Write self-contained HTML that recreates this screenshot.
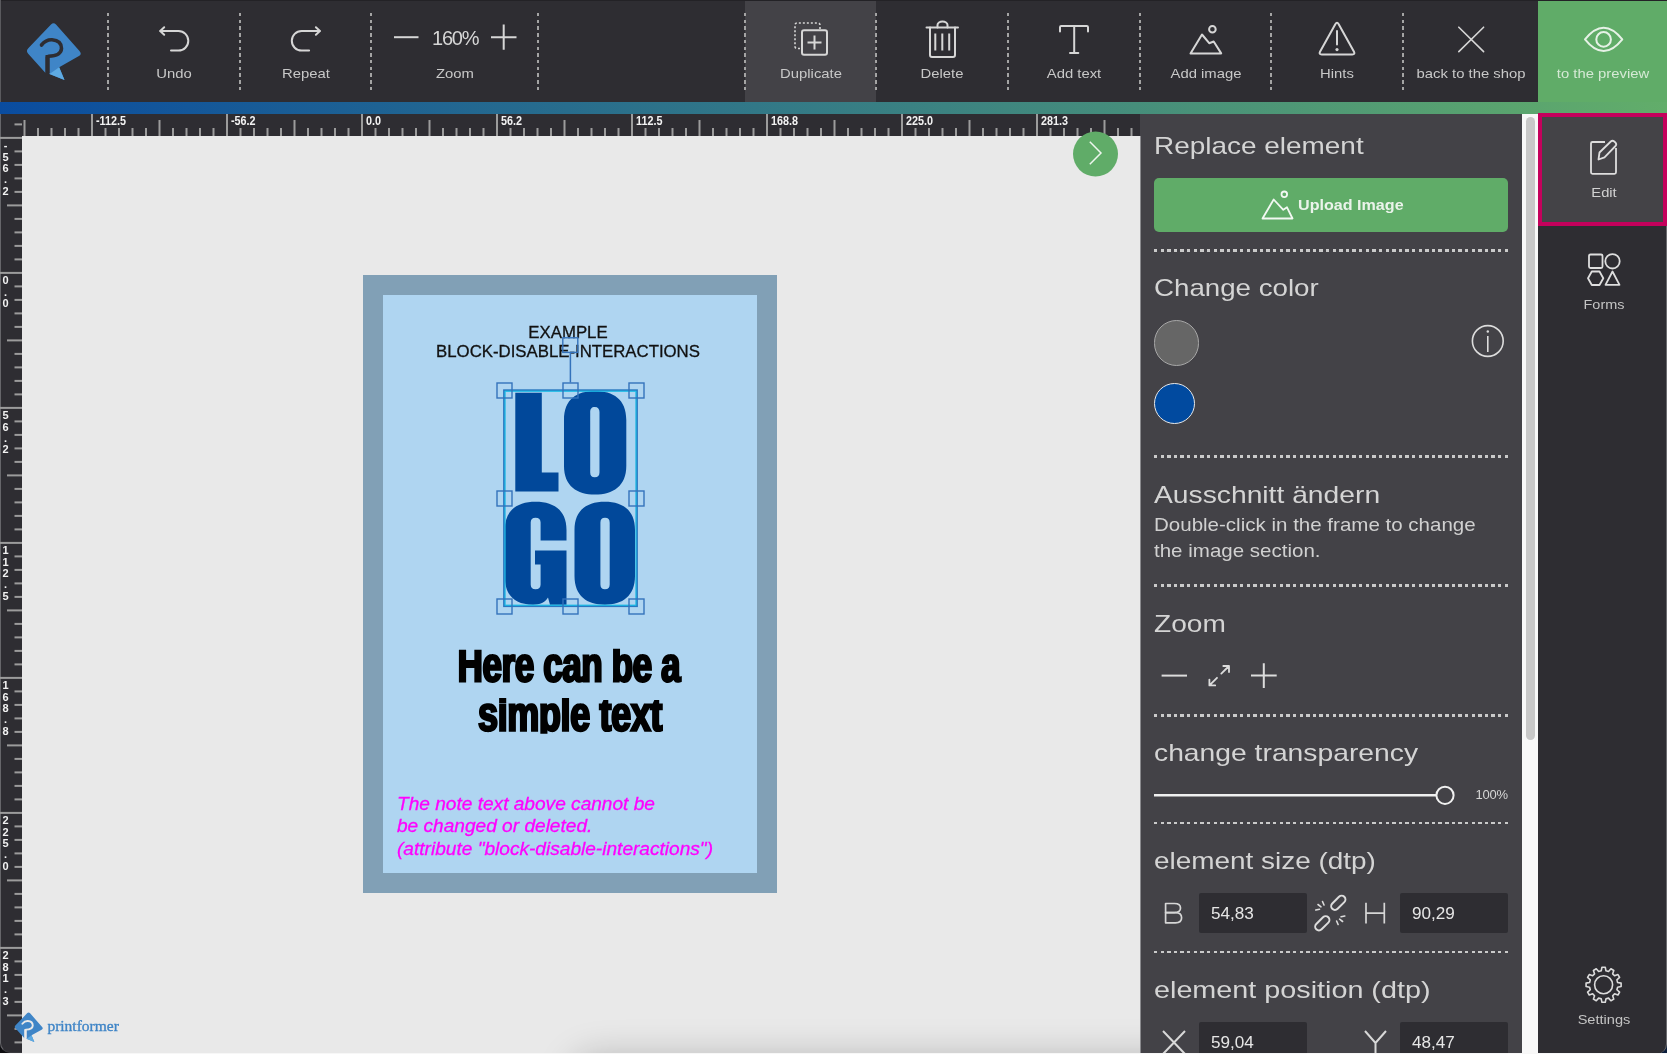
<!DOCTYPE html>
<html><head><meta charset="utf-8"><style>
*{margin:0;padding:0;box-sizing:border-box}
html,body{width:1667px;height:1054px;overflow:hidden;background:#e9e9e9;font-family:"Liberation Sans",sans-serif}
.a{position:absolute}
.lbl{position:absolute;top:67.44px;font-size:13.1px;color:#c8c8c8;letter-spacing:0;white-space:nowrap;line-height:14px;text-align:center;transform:scaleX(1.133);will-change:transform}
.sep{position:absolute;top:13px;width:2px;height:78px;margin-left:-1px;background:repeating-linear-gradient(to bottom,#a4a4a4 0,#a4a4a4 3.4px,transparent 3.4px,transparent 6.72px)}
.h{position:absolute;left:1154px;font-size:24px;color:#d4d4d4;letter-spacing:1.9px;white-space:nowrap;line-height:24px}
.dots{position:absolute;left:1154px;width:354px;height:2.6px;background:repeating-linear-gradient(to right,#cacaca 0,#cacaca 3.4px,transparent 3.4px,transparent 6.616px)}
svg{position:absolute;left:0;top:0;overflow:visible}
</style></head><body>
<div id="root" style="position:absolute;left:0;top:0;width:1667px;height:1054px;overflow:hidden;opacity:0.999;will-change:opacity">
<div class="a" style="left:0;top:0;width:1667px;height:102px;background:#2e2d32"></div>
<div class="a" style="left:0;top:0;width:1667px;height:1px;background:#232226"></div>
<div class="a" style="left:0;top:0;width:1px;height:114px;background:#5a5a5e"></div>
<div class="a" style="left:745px;top:1px;width:131px;height:101px;background:#434247"></div>
<div class="a" style="left:1538px;top:1px;width:129px;height:101px;background:#60ac68"></div>
<div class="sep" style="left:108px"></div>
<div class="sep" style="left:240px"></div>
<div class="sep" style="left:371px"></div>
<div class="sep" style="left:538px"></div>
<div class="sep" style="left:745px"></div>
<div class="sep" style="left:876px"></div>
<div class="sep" style="left:1008px"></div>
<div class="sep" style="left:1140px"></div>
<div class="sep" style="left:1271px"></div>
<div class="sep" style="left:1403px"></div>
<svg width="1667" height="102" viewBox="0 0 1667 102" style="left:0;top:0">
<g fill="none" stroke="#d6d6d6" stroke-width="2" stroke-linecap="round" stroke-linejoin="round">
<!-- undo -->
<path d="M160.5 31 H178.5 A9.8 9.8 0 0 1 178.5 50.6 H171"/>
<path d="M164.2 27.3 L160.2 31 L164.2 34.7"/>
<!-- repeat -->
<path d="M319.6 31 H301.6 A9.8 9.8 0 0 0 301.6 50.6 H309.1"/>
<path d="M315.9 27.3 L319.9 31 L315.9 34.7"/>
<!-- zoom -->
<path d="M394 37.2 H418.5" stroke-linecap="butt"/>
<path d="M491 37.2 H516.5 M503.7 24.6 V49.8" stroke-linecap="butt"/>
<!-- duplicate -->
<path d="M800 48.5 H797 A2 2 0 0 1 795 46.5 V25 A2 2 0 0 1 797 23 H818 A2 2 0 0 1 820 25 V30" stroke-dasharray="2 2" stroke-width="1.6" stroke-linecap="butt"/>
<rect x="802" y="30.2" width="25" height="24.5" rx="2"/>
<path d="M814.5 35.5 V49.5 M807.5 42.5 H821.5" stroke-linecap="butt"/>
<!-- delete -->
<path d="M926.5 27.5 H958"/>
<path d="M937.5 27.5 V25 A5 3.5 0 0 1 947.5 25 V27.5"/>
<path d="M930 27.5 V55 A2 2 0 0 0 932 57 H953 A2 2 0 0 0 955 55 V27.5"/>
<path d="M935.3 33.5 V50.5 M942.3 33.5 V50.5 M949.2 33.5 V50.5" stroke-linecap="butt"/>
<!-- add text -->
<path d="M1060 31.5 V27 A1.2 1.2 0 0 1 1061.2 25.9 H1086.8 A1.2 1.2 0 0 1 1088 27 V31.5"/>
<path d="M1074.2 26 V53 M1070 53 H1078.3"/>
<!-- add image -->
<path d="M1190.5 53.4 L1202 34.5 L1209.2 43.2 L1213.7 41.5 L1221.2 53.4 Z"/>
<circle cx="1212.4" cy="29.3" r="3.3"/>
<!-- hints -->
<path d="M1335.3 24.2 Q1337 21.5 1338.7 24.2 L1354 51.8 Q1355.3 54.5 1352.3 54.5 H1321.7 Q1318.7 54.5 1320 51.8 Z"/>
<path d="M1337 31 V44.5"/>
<!-- X -->
<path d="M1458.8 27.2 L1483.6 51.6 M1483.6 27.2 L1458.8 51.6" stroke-width="1.6"/>
<!-- eye -->
<path d="M1585 39.4 Q1603.6 16 1622.3 39.4 Q1603.6 62.8 1585 39.4 Z" stroke="#e6f2e6"/>
<circle cx="1603.6" cy="39.4" r="7.3" stroke="#e6f2e6"/>
</g>
<circle cx="1337" cy="49.6" r="1.6" fill="#d6d6d6"/>
<!-- logo -->
<g>
<path d="M51 24.5 Q53.5 22 56 24.5 L79.5 51 Q82.5 54.5 78.5 56.3 L59.2 67.3 L64.5 80 L49.5 74 L49.5 56.5 L45.5 56.5 L45.5 73 L28.2 53.8 Q25.5 50.8 28.5 48 Z" fill="#3f85c7"/>
<path d="M49.5 74 L59.2 67.3 L64.5 80 Z" fill="#5eaae2"/>
<path d="M41.5 45 Q46 39.5 52 39.8 Q61.5 40.5 61.5 48.5 Q61 56 48.5 56.2" fill="none" stroke="#2e2d32" stroke-width="3.6" stroke-linecap="round"/>
<path d="M47.5 55 V73" stroke="#2e2d32" stroke-width="4"/>
</g>
</svg>
<div class="a" style="left:432px;top:28px;font-size:20px;line-height:20px;color:#d6d6d6;white-space:nowrap;letter-spacing:-1.2px;will-change:transform">160%</div>
<div class="lbl" style="left:74px;width:200px;top:67.44px">Undo</div>
<div class="lbl" style="left:206px;width:200px;top:67.44px">Repeat</div>
<div class="lbl" style="left:355px;width:200px;top:67.44px">Zoom</div>
<div class="lbl" style="left:711px;width:200px;top:67.44px">Duplicate</div>
<div class="lbl" style="left:842px;width:200px;top:67.44px">Delete</div>
<div class="lbl" style="left:974px;width:200px;top:67.44px">Add text</div>
<div class="lbl" style="left:1106px;width:200px;top:67.44px">Add image</div>
<div class="lbl" style="left:1237px;width:200px;top:67.44px">Hints</div>
<div class="lbl" style="left:1371px;width:200px;top:67.44px">back to the shop</div>
<div class="lbl" style="left:1503px;width:200px;top:67.44px;color:#d5e9d5">to the preview</div>
<div class="a" style="left:0;top:102px;width:1667px;height:12px;background:linear-gradient(to right,#0a4c9f 0%,#62ad6a 100%)"></div>
<div class="a" style="left:22px;top:114px;width:1118px;height:22px;background:#2e2d32"></div>
<div class="a" style="left:0;top:1030px;width:22px;height:24px;background:#0d0d10"></div>
<div class="a" style="left:0;top:114px;width:22px;height:939px;background:#2e2d32;border-bottom-left-radius:10px;border-left:1px solid #66666a;border-bottom:1px solid #3a3a3e"></div>
<svg width="1667" height="1054" style="left:0;top:0">
<g fill="#9c9c9c">
<rect x="23.50" y="120" width="2" height="16"/>
<rect x="37.00" y="128" width="2" height="8"/>
<rect x="50.50" y="128" width="2" height="8"/>
<rect x="64.00" y="128" width="2" height="8"/>
<rect x="77.50" y="128" width="2" height="8"/>
<rect x="91.00" y="114" width="2" height="22"/>
<rect x="104.50" y="128" width="2" height="8"/>
<rect x="118.00" y="128" width="2" height="8"/>
<rect x="131.50" y="128" width="2" height="8"/>
<rect x="145.00" y="128" width="2" height="8"/>
<rect x="158.50" y="120" width="2" height="16"/>
<rect x="172.00" y="128" width="2" height="8"/>
<rect x="185.50" y="128" width="2" height="8"/>
<rect x="199.00" y="128" width="2" height="8"/>
<rect x="212.50" y="128" width="2" height="8"/>
<rect x="226.00" y="114" width="2" height="22"/>
<rect x="239.50" y="128" width="2" height="8"/>
<rect x="253.00" y="128" width="2" height="8"/>
<rect x="266.50" y="128" width="2" height="8"/>
<rect x="280.00" y="128" width="2" height="8"/>
<rect x="293.50" y="120" width="2" height="16"/>
<rect x="307.00" y="128" width="2" height="8"/>
<rect x="320.50" y="128" width="2" height="8"/>
<rect x="334.00" y="128" width="2" height="8"/>
<rect x="347.50" y="128" width="2" height="8"/>
<rect x="361.00" y="114" width="2" height="22"/>
<rect x="374.50" y="128" width="2" height="8"/>
<rect x="388.00" y="128" width="2" height="8"/>
<rect x="401.50" y="128" width="2" height="8"/>
<rect x="415.00" y="128" width="2" height="8"/>
<rect x="428.50" y="120" width="2" height="16"/>
<rect x="442.00" y="128" width="2" height="8"/>
<rect x="455.50" y="128" width="2" height="8"/>
<rect x="469.00" y="128" width="2" height="8"/>
<rect x="482.50" y="128" width="2" height="8"/>
<rect x="496.00" y="114" width="2" height="22"/>
<rect x="509.50" y="128" width="2" height="8"/>
<rect x="523.00" y="128" width="2" height="8"/>
<rect x="536.50" y="128" width="2" height="8"/>
<rect x="550.00" y="128" width="2" height="8"/>
<rect x="563.50" y="120" width="2" height="16"/>
<rect x="577.00" y="128" width="2" height="8"/>
<rect x="590.50" y="128" width="2" height="8"/>
<rect x="604.00" y="128" width="2" height="8"/>
<rect x="617.50" y="128" width="2" height="8"/>
<rect x="631.00" y="114" width="2" height="22"/>
<rect x="644.50" y="128" width="2" height="8"/>
<rect x="658.00" y="128" width="2" height="8"/>
<rect x="671.50" y="128" width="2" height="8"/>
<rect x="685.00" y="128" width="2" height="8"/>
<rect x="698.50" y="120" width="2" height="16"/>
<rect x="712.00" y="128" width="2" height="8"/>
<rect x="725.50" y="128" width="2" height="8"/>
<rect x="739.00" y="128" width="2" height="8"/>
<rect x="752.50" y="128" width="2" height="8"/>
<rect x="766.00" y="114" width="2" height="22"/>
<rect x="779.50" y="128" width="2" height="8"/>
<rect x="793.00" y="128" width="2" height="8"/>
<rect x="806.50" y="128" width="2" height="8"/>
<rect x="820.00" y="128" width="2" height="8"/>
<rect x="833.50" y="120" width="2" height="16"/>
<rect x="847.00" y="128" width="2" height="8"/>
<rect x="860.50" y="128" width="2" height="8"/>
<rect x="874.00" y="128" width="2" height="8"/>
<rect x="887.50" y="128" width="2" height="8"/>
<rect x="901.00" y="114" width="2" height="22"/>
<rect x="914.50" y="128" width="2" height="8"/>
<rect x="928.00" y="128" width="2" height="8"/>
<rect x="941.50" y="128" width="2" height="8"/>
<rect x="955.00" y="128" width="2" height="8"/>
<rect x="968.50" y="120" width="2" height="16"/>
<rect x="982.00" y="128" width="2" height="8"/>
<rect x="995.50" y="128" width="2" height="8"/>
<rect x="1009.00" y="128" width="2" height="8"/>
<rect x="1022.50" y="128" width="2" height="8"/>
<rect x="1036.00" y="114" width="2" height="22"/>
<rect x="1049.50" y="128" width="2" height="8"/>
<rect x="1063.00" y="128" width="2" height="8"/>
<rect x="1076.50" y="128" width="2" height="8"/>
<rect x="1090.00" y="128" width="2" height="8"/>
<rect x="1103.50" y="120" width="2" height="16"/>
<rect x="1117.00" y="128" width="2" height="8"/>
<rect x="1130.50" y="128" width="2" height="8"/>
<rect x="14.5" y="123.40" width="7.5" height="2"/>
<rect x="0" y="136.90" width="22" height="2"/>
<rect x="14.5" y="150.40" width="7.5" height="2"/>
<rect x="14.5" y="163.90" width="7.5" height="2"/>
<rect x="14.5" y="177.40" width="7.5" height="2"/>
<rect x="14.5" y="190.90" width="7.5" height="2"/>
<rect x="7" y="204.40" width="15" height="2"/>
<rect x="14.5" y="217.90" width="7.5" height="2"/>
<rect x="14.5" y="231.40" width="7.5" height="2"/>
<rect x="14.5" y="244.90" width="7.5" height="2"/>
<rect x="14.5" y="258.40" width="7.5" height="2"/>
<rect x="0" y="271.90" width="22" height="2"/>
<rect x="14.5" y="285.40" width="7.5" height="2"/>
<rect x="14.5" y="298.90" width="7.5" height="2"/>
<rect x="14.5" y="312.40" width="7.5" height="2"/>
<rect x="14.5" y="325.90" width="7.5" height="2"/>
<rect x="7" y="339.40" width="15" height="2"/>
<rect x="14.5" y="352.90" width="7.5" height="2"/>
<rect x="14.5" y="366.40" width="7.5" height="2"/>
<rect x="14.5" y="379.90" width="7.5" height="2"/>
<rect x="14.5" y="393.40" width="7.5" height="2"/>
<rect x="0" y="406.90" width="22" height="2"/>
<rect x="14.5" y="420.40" width="7.5" height="2"/>
<rect x="14.5" y="433.90" width="7.5" height="2"/>
<rect x="14.5" y="447.40" width="7.5" height="2"/>
<rect x="14.5" y="460.90" width="7.5" height="2"/>
<rect x="7" y="474.40" width="15" height="2"/>
<rect x="14.5" y="487.90" width="7.5" height="2"/>
<rect x="14.5" y="501.40" width="7.5" height="2"/>
<rect x="14.5" y="514.90" width="7.5" height="2"/>
<rect x="14.5" y="528.40" width="7.5" height="2"/>
<rect x="0" y="541.90" width="22" height="2"/>
<rect x="14.5" y="555.40" width="7.5" height="2"/>
<rect x="14.5" y="568.90" width="7.5" height="2"/>
<rect x="14.5" y="582.40" width="7.5" height="2"/>
<rect x="14.5" y="595.90" width="7.5" height="2"/>
<rect x="7" y="609.40" width="15" height="2"/>
<rect x="14.5" y="622.90" width="7.5" height="2"/>
<rect x="14.5" y="636.40" width="7.5" height="2"/>
<rect x="14.5" y="649.90" width="7.5" height="2"/>
<rect x="14.5" y="663.40" width="7.5" height="2"/>
<rect x="0" y="676.90" width="22" height="2"/>
<rect x="14.5" y="690.40" width="7.5" height="2"/>
<rect x="14.5" y="703.90" width="7.5" height="2"/>
<rect x="14.5" y="717.40" width="7.5" height="2"/>
<rect x="14.5" y="730.90" width="7.5" height="2"/>
<rect x="7" y="744.40" width="15" height="2"/>
<rect x="14.5" y="757.90" width="7.5" height="2"/>
<rect x="14.5" y="771.40" width="7.5" height="2"/>
<rect x="14.5" y="784.90" width="7.5" height="2"/>
<rect x="14.5" y="798.40" width="7.5" height="2"/>
<rect x="0" y="811.90" width="22" height="2"/>
<rect x="14.5" y="825.40" width="7.5" height="2"/>
<rect x="14.5" y="838.90" width="7.5" height="2"/>
<rect x="14.5" y="852.40" width="7.5" height="2"/>
<rect x="14.5" y="865.90" width="7.5" height="2"/>
<rect x="7" y="879.40" width="15" height="2"/>
<rect x="14.5" y="892.90" width="7.5" height="2"/>
<rect x="14.5" y="906.40" width="7.5" height="2"/>
<rect x="14.5" y="919.90" width="7.5" height="2"/>
<rect x="14.5" y="933.40" width="7.5" height="2"/>
<rect x="0" y="946.90" width="22" height="2"/>
<rect x="14.5" y="960.40" width="7.5" height="2"/>
<rect x="14.5" y="973.90" width="7.5" height="2"/>
<rect x="14.5" y="987.40" width="7.5" height="2"/>
<rect x="14.5" y="1000.90" width="7.5" height="2"/>
<rect x="7" y="1014.40" width="15" height="2"/>
<rect x="14.5" y="1027.90" width="7.5" height="2"/>
<rect x="14.5" y="1041.40" width="7.5" height="2"/>
</g>
</svg>
<div class="a" style="left:96.3px;top:115.2px;font-size:12px;line-height:12px;font-weight:bold;color:#f2f2f2;white-space:nowrap;transform:scaleX(0.9);transform-origin:0 0">-112.5</div>
<div class="a" style="left:231.3px;top:115.2px;font-size:12px;line-height:12px;font-weight:bold;color:#f2f2f2;white-space:nowrap;transform:scaleX(0.9);transform-origin:0 0">-56.2</div>
<div class="a" style="left:366.3px;top:115.2px;font-size:12px;line-height:12px;font-weight:bold;color:#f2f2f2;white-space:nowrap;transform:scaleX(0.9);transform-origin:0 0">0.0</div>
<div class="a" style="left:501.3px;top:115.2px;font-size:12px;line-height:12px;font-weight:bold;color:#f2f2f2;white-space:nowrap;transform:scaleX(0.9);transform-origin:0 0">56.2</div>
<div class="a" style="left:636.3px;top:115.2px;font-size:12px;line-height:12px;font-weight:bold;color:#f2f2f2;white-space:nowrap;transform:scaleX(0.9);transform-origin:0 0">112.5</div>
<div class="a" style="left:771.3px;top:115.2px;font-size:12px;line-height:12px;font-weight:bold;color:#f2f2f2;white-space:nowrap;transform:scaleX(0.9);transform-origin:0 0">168.8</div>
<div class="a" style="left:906.3px;top:115.2px;font-size:12px;line-height:12px;font-weight:bold;color:#f2f2f2;white-space:nowrap;transform:scaleX(0.9);transform-origin:0 0">225.0</div>
<div class="a" style="left:1041.3px;top:115.2px;font-size:12px;line-height:12px;font-weight:bold;color:#f2f2f2;white-space:nowrap;transform:scaleX(0.9);transform-origin:0 0">281.3</div>
<div class="a" style="left:0.5px;top:140.4px;width:10px;font-size:11px;line-height:11.35px;font-weight:bold;color:#f2f2f2;text-align:center">-<br>5<br>6<br>.<br>2</div>
<div class="a" style="left:0.5px;top:275.4px;width:10px;font-size:11px;line-height:11.35px;font-weight:bold;color:#f2f2f2;text-align:center">0<br>.<br>0</div>
<div class="a" style="left:0.5px;top:410.4px;width:10px;font-size:11px;line-height:11.35px;font-weight:bold;color:#f2f2f2;text-align:center">5<br>6<br>.<br>2</div>
<div class="a" style="left:0.5px;top:545.4px;width:10px;font-size:11px;line-height:11.35px;font-weight:bold;color:#f2f2f2;text-align:center">1<br>1<br>2<br>.<br>5</div>
<div class="a" style="left:0.5px;top:680.4px;width:10px;font-size:11px;line-height:11.35px;font-weight:bold;color:#f2f2f2;text-align:center">1<br>6<br>8<br>.<br>8</div>
<div class="a" style="left:0.5px;top:815.4px;width:10px;font-size:11px;line-height:11.35px;font-weight:bold;color:#f2f2f2;text-align:center">2<br>2<br>5<br>.<br>0</div>
<div class="a" style="left:0.5px;top:950.4px;width:10px;font-size:11px;line-height:11.35px;font-weight:bold;color:#f2f2f2;text-align:center">2<br>8<br>1<br>.<br>3</div>
<div class="a" style="left:22px;top:136px;width:1118px;height:918px;background:#e9e9e9;overflow:hidden"><div class="a" style="left:555px;top:926px;width:745px;height:40px;border-radius:30px;background:#999;box-shadow:0 0 36px 6px rgba(0,0,0,0.22)"></div></div>
<svg width="1667" height="1054" style="left:0;top:0">
<circle cx="1095.5" cy="154" r="22.5" fill="#60ac68"/>
<path d="M1089.8 141.8 L1101 153 L1089.8 164.2" fill="none" stroke="#eef6ee" stroke-width="1.5"/>
</svg>
<div class="a" style="left:363.4px;top:274.7px;width:413.9px;height:618.1px;background:#81a0b6"></div>
<div class="a" style="left:383px;top:294.6px;width:374.2px;height:578.2px;background:#afd5f1"></div>
<div class="a" style="left:383px;top:322.8px;width:374px;text-align:center;font-size:16.8px;line-height:19.2px;color:#111;-webkit-text-stroke:0.3px #111;white-space:nowrap"><span style="position:relative;left:-2px">EXAMPLE</span><br><span style="position:relative;left:-2px">BLOCK-DISABLE-INTERACTIONS</span></div>
<svg width="1667" height="1054" style="left:0;top:0">
<g fill="#00489a">
<!-- L -->
<path d="M515.3 392.8 H541.8 V472.4 H558.5 V491.5 H515.3 Z"/>
<!-- O top -->
<path fill-rule="evenodd" d="M595 391 C613 391 626.3 399 626.3 420 V466 C626.3 486 613 494.6 595 494.6 C577 494.6 564 486 564 466 V420 C564 399 577 391 595 391 Z
 M594.8 407 C591.5 407 590.2 409 590.2 412 V472.3 C590.2 475.5 591.5 477.3 594.8 477.3 C598 477.3 599.5 475.5 599.5 472.3 V412 C599.5 409 598 407 594.8 407 Z"/>
<!-- G -->
<path fill-rule="evenodd" d="M535.6 501.7 C553.5 501.7 566.5 510 566.5 530 V540.6 H540.6 V522.5 C540.6 519.5 539 517.8 535.6 517.8 C532.2 517.8 530.7 519.5 530.7 522.5 V584.6 C530.7 587.6 532.2 589.3 535.6 589.3 C539 589.3 540.6 587.6 540.6 584.6 V564.6 H535 V550.4 H566.5 V604.7 H550 L548 597.5 C545 602.5 540 604.7 533 604.7 C515 604.7 504.8 596 504.8 576 V530 C504.8 510 517.5 501.7 535.6 501.7 Z"/>
<!-- O bottom -->
<path fill-rule="evenodd" d="M604.8 501.7 C622.5 501.7 635 510 635 530 V576 C635 596 622.5 604.7 604.8 604.7 C587 604.7 574.5 596 574.5 576 V530 C574.5 510 587 501.7 604.8 501.7 Z
 M605 517.8 C601.8 517.8 600.4 519.5 600.4 522.8 V584.3 C600.4 587.6 601.8 589.3 605 589.3 C608.3 589.3 609.7 587.6 609.7 584.3 V522.8 C609.7 519.5 608.3 517.8 605 517.8 Z"/>
</g>
<!-- selection frame -->
<rect x="504.2" y="390.4" width="132.6" height="215.6" fill="none" stroke="#2a78c0" stroke-width="2.2"/>
<rect x="505" y="391.2" width="131" height="214" fill="none" stroke="#19c9ee" stroke-width="1"/>
<path d="M570.4 352.4 V382.5" stroke="#3472bb" stroke-width="1.5"/>
<g fill="none" stroke="#3472bb" stroke-width="1.4">
<rect x="497" y="383" width="15" height="15"/>
<rect x="563" y="383" width="15" height="15"/>
<rect x="629" y="383" width="15" height="15"/>
<rect x="497" y="491" width="15" height="15"/>
<rect x="629" y="491" width="15" height="15"/>
<rect x="497" y="599" width="15" height="15"/>
<rect x="563" y="599" width="15" height="15"/>
<rect x="629" y="599" width="15" height="15"/>
<rect x="562.8" y="337.8" width="15" height="14.6"/>
</g>
</svg>
<svg width="1667" height="1054" style="left:0;top:0"><path fill="#000" fill-rule="evenodd" d="M672.05 681.45 L673.15 680.30 L673.45 679.85 L673.46 679.88 L673.74 680.50 L674.08 681.08 L674.51 681.60 L675.02 682.04 L675.62 682.38 L676.27 682.60 L676.94 682.72 L677.62 682.76 L677.83 682.76 L678.00 682.75 L678.17 682.75 L678.34 682.74 L678.50 682.73 L678.66 682.71 L678.80 682.69 L678.93 682.68 L679.07 682.66 L679.20 682.63 L679.33 682.61 L679.47 682.59 L679.60 682.56 L679.73 682.53 L679.87 682.50 L680.02 682.46 L680.17 682.41 L680.30 682.37 L680.42 682.33 L680.53 682.29 L680.66 682.24 L680.78 682.20 L680.92 682.15 L681.80 681.85 L681.80 676.01 L680.28 676.40 L680.16 676.42 L680.04 676.44 L679.91 676.46 L679.78 676.47 L679.68 676.47 L679.60 676.46 L679.59 676.46 L679.58 676.45 L679.55 676.41 L679.50 676.31 L679.44 676.13 L679.37 675.84 L679.32 675.45 L679.27 674.97 L679.24 674.39 L679.24 673.73 L679.24 664.29 L679.18 662.80 L679.01 661.38 L678.73 660.07 L678.32 658.86 L677.78 657.75 L677.12 656.76 L676.33 655.89 L675.43 655.18 L674.38 654.60 L673.23 654.29 L672.08 654.16 L670.88 654.12 L669.70 654.15 L668.59 654.25 L667.47 654.45 L666.41 654.91 L665.49 655.48 L664.66 656.18 L663.93 657.00 L663.32 657.92 L662.80 658.95 L662.40 660.06 L662.09 661.27 L661.69 663.72 L668.94 664.21 L669.11 662.56 L669.19 662.07 L669.28 661.65 L669.39 661.31 L669.51 661.06 L669.62 660.88 L669.72 660.77 L669.83 660.68 L669.97 660.60 L670.15 660.54 L670.38 660.50 L670.66 660.48 L670.95 660.50 L671.17 660.56 L671.33 660.63 L671.48 660.74 L671.61 660.89 L671.75 661.12 L671.89 661.44 L672.01 661.85 L672.12 662.35 L672.19 662.94 L672.24 663.62 L672.26 664.39 L672.26 664.62 L669.35 664.69 L668.13 664.77 L666.96 664.98 L665.87 665.33 L664.87 665.82 L663.97 666.45 L663.17 667.22 L662.50 668.11 L661.96 669.11 L661.55 670.21 L661.26 671.41 L661.09 672.69 L661.04 674.07 L661.08 675.35 L661.22 676.54 L661.45 677.65 L661.78 678.68 L662.21 679.63 L662.75 680.48 L663.38 681.24 L664.12 681.86 L664.95 682.37 L665.86 682.69 L666.80 682.88 L667.82 682.94 L669.32 682.79 L670.76 682.31ZM672.21 671.72 L672.14 672.20 L672.05 672.67 L671.93 673.13 L671.79 673.58 L671.63 674.00 L671.45 674.38 L671.27 674.72 L671.06 675.03 L670.85 675.29 L670.63 675.52 L670.41 675.71 L670.19 675.85 L669.98 675.96 L669.77 676.03 L669.55 676.07 L669.34 676.08 L669.18 676.07 L669.07 676.04 L668.96 676.00 L668.86 675.93 L668.76 675.83 L668.64 675.68 L668.53 675.49 L668.43 675.24 L668.35 674.92 L668.28 674.53 L668.24 674.07 L668.22 673.55 L668.23 673.14 L668.26 672.76 L668.30 672.43 L668.35 672.14 L668.42 671.89 L668.50 671.68 L668.59 671.50 L668.68 671.34 L668.78 671.20 L668.89 671.09 L669.00 671.00 L669.11 670.92 L669.24 670.85 L669.44 670.78 L669.72 670.71 L670.07 670.64 L670.49 670.59 L670.96 670.55 L672.26 670.53 L672.26 670.71 L672.25 671.23ZM648.36 680.95 L649.74 679.39 L650.83 677.45 L652.08 673.92 L645.28 673.09 L644.78 674.84 L644.50 675.41 L644.18 675.81 L643.84 676.06 L643.42 676.21 L642.88 676.27 L642.50 676.24 L642.18 676.14 L641.88 675.98 L641.59 675.74 L641.31 675.40 L641.03 674.94 L640.78 674.37 L640.57 673.68 L640.39 672.87 L640.26 671.94 L640.19 670.90 L640.19 670.84 L651.96 670.84 L651.96 669.54 L651.90 667.21 L651.72 665.05 L651.41 663.07 L650.99 661.26 L650.42 659.63 L649.72 658.17 L648.89 656.91 L647.91 655.85 L646.77 655.00 L645.47 654.40 L644.09 654.18 L642.72 654.12 L641.29 654.18 L639.88 654.37 L638.53 654.90 L637.34 655.69 L636.29 656.68 L635.38 657.86 L634.62 659.22 L634.01 660.74 L633.54 662.41 L633.21 664.23 L633.01 666.20 L632.94 668.33 L633.01 670.52 L633.20 672.55 L633.53 674.41 L633.99 676.11 L634.59 677.65 L635.35 679.02 L636.24 680.21 L637.28 681.20 L638.46 681.99 L639.76 682.54 L641.17 682.84 L642.66 682.94 L644.76 682.74 L646.68 682.09ZM640.25 664.43 L640.31 663.84 L640.44 663.12 L640.60 662.47 L640.79 661.92 L641.02 661.45 L641.26 661.07 L641.50 660.80 L641.75 660.60 L642.01 660.47 L642.30 660.39 L642.65 660.36 L642.96 660.39 L643.23 660.46 L643.48 660.59 L643.73 660.77 L643.97 661.04 L644.22 661.39 L644.44 661.84 L644.65 662.38 L644.82 663.03 L644.97 663.78 L645.05 664.43ZM620.02 655.92 L620.03 655.80 L620.03 648.74 L613.05 648.74 L613.05 675.49 L613.05 676.67 L613.04 677.77 L613.02 678.78 L612.99 679.72 L612.96 680.57 L612.85 682.50 L619.58 682.50 L619.77 681.40 L619.80 681.13 L619.82 680.96 L619.87 681.02 L620.41 681.53 L621.01 681.97 L621.65 682.34 L622.34 682.61 L623.04 682.79 L623.76 682.90 L624.52 682.94 L625.78 682.83 L627.00 682.51 L628.13 681.91 L629.12 681.08 L629.98 680.05 L630.71 678.83 L631.32 677.45 L631.81 675.93 L632.18 674.25 L632.45 672.44 L632.61 670.47 L632.66 668.35 L632.61 666.26 L632.46 664.31 L632.21 662.51 L631.85 660.87 L631.38 659.36 L630.80 658.01 L630.10 656.81 L629.27 655.80 L628.31 654.97 L627.17 654.39 L625.98 654.18 L624.81 654.12 L623.30 654.21 L621.82 654.55 L620.49 655.42ZM625.08 673.08 L624.61 674.60 L624.05 675.55 L623.46 676.01 L622.73 676.17 L622.40 676.14 L622.07 676.03 L621.76 675.84 L621.46 675.54 L621.15 675.11 L620.86 674.54 L620.60 673.83 L620.37 673.00 L620.19 672.06 L620.06 671.01 L619.99 669.84 L619.96 668.57 L619.99 667.24 L620.07 666.02 L620.20 664.94 L620.38 663.97 L620.61 663.13 L620.88 662.42 L621.17 661.86 L621.48 661.43 L621.79 661.14 L622.10 660.95 L622.43 660.83 L622.82 660.79 L623.21 660.83 L623.54 660.94 L623.83 661.11 L624.11 661.37 L624.39 661.75 L624.65 662.26 L624.89 662.92 L625.09 663.72 L625.26 664.67 L625.38 665.76 L625.45 666.99 L625.48 668.34 L625.37 670.98ZM555.75 682.64 L556.52 682.40 L557.26 682.07 L557.96 681.67 L558.62 681.21 L559.23 680.68 L559.80 680.10 L560.32 679.47 L560.79 678.78 L561.22 678.04 L561.60 677.25 L561.92 676.44 L562.19 675.60 L562.28 675.25 L562.28 675.35 L562.42 676.54 L562.65 677.65 L562.98 678.68 L563.41 679.63 L563.95 680.48 L564.58 681.24 L565.32 681.86 L566.15 682.37 L567.06 682.69 L568.00 682.88 L569.02 682.94 L570.52 682.79 L571.96 682.31 L573.25 681.45 L574.35 680.30 L574.65 679.85 L574.66 679.88 L574.94 680.50 L575.28 681.08 L575.71 681.60 L576.22 682.04 L576.82 682.38 L577.47 682.60 L578.14 682.72 L578.82 682.76 L579.03 682.76 L579.20 682.75 L579.37 682.75 L579.54 682.74 L579.70 682.73 L579.85 682.71 L580.00 682.69 L580.13 682.68 L580.27 682.66 L580.40 682.63 L580.53 682.61 L580.67 682.59 L580.80 682.56 L580.93 682.53 L581.07 682.50 L581.22 682.46 L581.37 682.41 L581.50 682.37 L581.62 682.33 L581.73 682.29 L581.86 682.24 L581.98 682.20 L582.12 682.15 L582.71 681.95 L582.71 682.50 L589.69 682.50 L589.69 667.53 L589.72 666.52 L589.80 665.60 L589.93 664.75 L590.12 663.97 L590.35 663.27 L590.63 662.64 L590.94 662.12 L591.24 661.73 L591.54 661.46 L591.83 661.29 L592.12 661.19 L592.40 661.16 L593.02 661.27 L593.47 661.59 L593.91 662.25 L594.29 663.35 L594.54 664.90 L594.63 666.89 L594.63 682.50 L601.59 682.50 L601.59 664.94 L601.54 663.33 L601.41 661.82 L601.17 660.43 L600.84 659.15 L600.41 658.00 L599.86 656.95 L599.21 656.04 L598.44 655.28 L597.52 654.64 L596.49 654.30 L595.48 654.15 L594.44 654.10 L593.70 654.13 L592.99 654.20 L592.28 654.33 L591.51 654.59 L590.81 655.03 L590.21 655.53 L589.64 656.11 L589.40 656.43 L589.39 656.27 L589.37 655.90 L589.35 655.60 L589.23 654.40 L582.52 654.40 L582.59 655.91 L582.61 656.28 L582.63 656.67 L582.64 657.07 L582.66 657.48 L582.67 657.92 L582.68 658.37 L582.69 658.87 L582.70 659.41 L582.71 660.00 L582.71 660.62 L582.71 661.29 L582.71 676.08 L581.48 676.40 L581.36 676.42 L581.23 676.44 L581.11 676.46 L580.98 676.47 L580.88 676.47 L580.80 676.46 L580.79 676.46 L580.78 676.45 L580.75 676.41 L580.70 676.31 L580.64 676.13 L580.57 675.84 L580.52 675.45 L580.47 674.97 L580.44 674.39 L580.44 673.73 L580.44 664.29 L580.38 662.80 L580.21 661.38 L579.93 660.07 L579.52 658.86 L578.98 657.75 L578.32 656.76 L577.53 655.89 L576.62 655.18 L575.58 654.60 L574.43 654.29 L573.28 654.16 L572.08 654.12 L570.90 654.15 L569.79 654.25 L568.67 654.45 L567.61 654.91 L566.69 655.48 L565.86 656.18 L565.13 657.00 L564.51 657.92 L564.00 658.95 L563.60 660.06 L563.29 661.27 L562.89 663.72 L570.14 664.21 L570.31 662.56 L570.39 662.07 L570.48 661.65 L570.59 661.31 L570.71 661.06 L570.81 660.88 L570.92 660.77 L571.03 660.68 L571.17 660.60 L571.35 660.54 L571.58 660.50 L571.86 660.48 L572.15 660.50 L572.36 660.56 L572.53 660.63 L572.68 660.74 L572.81 660.89 L572.95 661.12 L573.09 661.44 L573.21 661.85 L573.32 662.35 L573.39 662.94 L573.44 663.62 L573.46 664.39 L573.46 664.62 L570.55 664.69 L569.33 664.77 L568.16 664.98 L567.07 665.33 L566.07 665.82 L565.17 666.45 L564.37 667.22 L563.70 668.11 L563.16 669.11 L562.75 670.21 L562.46 671.41 L562.42 671.73 L555.84 671.31 L555.62 673.07 L555.51 673.69 L555.36 674.24 L555.19 674.70 L555.00 675.09 L554.79 675.41 L554.56 675.67 L554.34 675.86 L554.12 676.01 L553.90 676.10 L553.66 676.16 L553.46 676.17 L552.72 676.01 L552.15 675.55 L551.59 674.60 L551.13 673.07 L550.83 670.97 L550.73 668.33 L550.83 665.77 L551.12 663.74 L551.57 662.26 L552.11 661.35 L552.67 660.90 L553.40 660.75 L553.64 660.77 L553.91 660.83 L554.14 660.92 L554.35 661.05 L554.54 661.22 L554.73 661.46 L554.92 661.77 L555.09 662.13 L555.25 662.55 L555.38 663.02 L555.48 663.54 L555.70 665.17 L562.76 664.68 L562.31 662.13 L561.98 660.83 L561.54 659.63 L561.00 658.51 L560.35 657.49 L559.60 656.57 L558.76 655.77 L557.83 655.10 L556.78 654.56 L555.66 654.28 L554.56 654.16 L553.42 654.12 L551.97 654.18 L550.54 654.38 L549.17 654.94 L547.96 655.75 L546.90 656.78 L545.99 658.00 L545.22 659.40 L544.59 660.95 L544.12 662.64 L543.78 664.48 L543.58 666.46 L543.52 668.59 L543.58 670.68 L543.78 672.62 L544.11 674.43 L544.59 676.09 L545.21 677.60 L545.97 678.98 L546.88 680.18 L547.94 681.18 L549.12 681.97 L550.45 682.53 L551.86 682.84 L553.34 682.93 L554.17 682.90 L554.97 682.80ZM573.44 671.23 L573.41 671.72 L573.34 672.20 L573.25 672.67 L573.13 673.13 L572.99 673.58 L572.83 674.00 L572.65 674.38 L572.47 674.72 L572.26 675.03 L572.05 675.29 L571.83 675.52 L571.60 675.71 L571.39 675.85 L571.18 675.96 L570.97 676.03 L570.75 676.07 L570.54 676.08 L570.38 676.07 L570.27 676.04 L570.16 676.00 L570.06 675.93 L569.96 675.83 L569.84 675.68 L569.73 675.49 L569.63 675.24 L569.55 674.92 L569.48 674.53 L569.44 674.07 L569.42 673.55 L569.43 673.14 L569.46 672.76 L569.50 672.43 L569.55 672.14 L569.62 671.89 L569.70 671.68 L569.79 671.50 L569.88 671.34 L569.98 671.20 L570.09 671.09 L570.20 671.00 L570.31 670.92 L570.44 670.85 L570.64 670.78 L570.92 670.71 L571.27 670.64 L571.69 670.59 L572.16 670.55 L573.46 670.53 L573.46 670.71ZM509.55 655.73 L509.54 655.60 L509.43 654.40 L502.72 654.40 L502.79 655.92 L502.80 656.31 L502.82 656.72 L502.83 657.15 L502.85 657.59 L502.86 658.06 L502.88 658.55 L502.89 659.07 L502.89 659.64 L502.90 660.25 L502.90 660.89 L502.91 661.58 L502.91 682.50 L509.88 682.50 L509.88 668.70 L509.91 667.46 L509.99 666.35 L510.12 665.36 L510.29 664.50 L510.51 663.76 L510.77 663.14 L511.05 662.65 L511.33 662.28 L511.62 662.03 L511.90 661.86 L512.21 661.76 L512.59 661.72 L512.79 661.73 L513.04 661.75 L513.32 661.80 L513.61 661.86 L513.93 661.93 L515.67 662.44 L515.34 664.23 L515.15 666.20 L515.08 668.33 L515.15 670.52 L515.34 672.55 L515.66 674.41 L516.13 676.11 L516.73 677.65 L517.48 679.02 L518.38 680.21 L519.42 681.20 L520.59 681.99 L521.90 682.54 L523.30 682.84 L524.80 682.94 L526.90 682.74 L528.82 682.09 L530.49 680.95 L531.87 679.39 L532.96 677.45 L534.22 673.92 L527.42 673.09 L526.91 674.84 L526.63 675.41 L526.32 675.81 L525.98 676.06 L525.56 676.21 L525.01 676.27 L524.64 676.24 L524.31 676.14 L524.02 675.98 L523.73 675.74 L523.45 675.40 L523.17 674.94 L522.92 674.37 L522.70 673.68 L522.53 672.87 L522.40 671.94 L522.32 670.90 L522.32 670.84 L534.09 670.84 L534.09 669.54 L534.04 667.21 L533.86 665.05 L533.55 663.07 L533.12 661.26 L532.56 659.63 L531.86 658.17 L531.02 656.91 L530.04 655.85 L528.91 655.00 L527.60 654.40 L526.23 654.18 L524.86 654.12 L523.42 654.18 L522.02 654.37 L520.67 654.90 L519.47 655.69 L518.43 656.68 L517.52 657.86 L516.76 659.22 L516.15 660.74 L515.70 662.34 L515.70 654.62 L514.70 654.29 L514.41 654.22 L514.10 654.17 L513.79 654.13 L513.46 654.11 L513.11 654.10 L512.70 654.11 L512.29 654.15 L511.90 654.20 L511.53 654.28 L511.14 654.39 L510.68 654.58 L510.27 654.91 L509.97 655.21 L509.68 655.54ZM522.39 664.43 L522.45 663.84 L522.57 663.12 L522.74 662.47 L522.93 661.92 L523.16 661.45 L523.40 661.07 L523.64 660.80 L523.89 660.60 L524.15 660.47 L524.44 660.39 L524.78 660.36 L525.10 660.39 L525.37 660.46 L525.62 660.59 L525.86 660.77 L526.11 661.04 L526.35 661.39 L526.58 661.84 L526.79 662.38 L526.96 663.03 L527.10 663.78 L527.18 664.43ZM498.18 680.95 L499.56 679.39 L500.65 677.45 L501.91 673.92 L495.11 673.09 L494.60 674.84 L494.32 675.41 L494.01 675.81 L493.67 676.06 L493.25 676.21 L492.70 676.27 L492.33 676.24 L492.00 676.14 L491.71 675.98 L491.42 675.74 L491.14 675.40 L490.86 674.94 L490.61 674.37 L490.39 673.68 L490.22 672.87 L490.09 671.94 L490.01 670.90 L490.01 670.84 L501.78 670.84 L501.78 669.54 L501.73 667.21 L501.55 665.05 L501.24 663.07 L500.81 661.26 L500.25 659.63 L499.55 658.17 L498.71 656.91 L497.73 655.85 L496.60 655.00 L495.29 654.40 L493.92 654.18 L492.55 654.12 L491.11 654.18 L489.71 654.37 L488.36 654.90 L487.16 655.69 L486.12 656.68 L485.21 657.86 L484.45 659.22 L483.84 660.74 L483.36 662.41 L483.03 664.23 L482.84 666.20 L482.77 668.33 L482.84 670.52 L483.03 672.55 L483.35 674.41 L483.82 676.11 L484.42 677.65 L485.17 679.02 L486.07 680.21 L487.11 681.20 L488.28 681.99 L489.59 682.54 L490.99 682.84 L492.49 682.94 L494.59 682.74 L496.51 682.09ZM490.08 664.43 L490.14 663.84 L490.26 663.12 L490.43 662.47 L490.62 661.92 L490.84 661.45 L491.09 661.07 L491.33 660.80 L491.58 660.60 L491.84 660.47 L492.13 660.39 L492.47 660.36 L492.79 660.39 L493.06 660.46 L493.31 660.59 L493.55 660.77 L493.80 661.04 L494.04 661.39 L494.27 661.84 L494.48 662.38 L494.65 663.03 L494.79 663.78 L494.87 664.43ZM474.35 649.80 L474.35 660.00 L466.11 660.00 L466.11 649.80 L458.90 649.80 L458.90 682.50 L466.11 682.50 L466.11 668.04 L474.35 668.04 L474.35 682.50 L481.57 682.50 L481.57 649.80ZM644.02 703.60 L640.69 710.61 L637.34 703.60 L629.52 703.60 L636.70 717.22 L629.20 731.70 L636.94 731.70 L640.68 723.79 L644.40 731.70 L652.25 731.70 L644.70 717.15 L649.74 707.64 L649.74 710.35 L652.14 710.35 L652.14 724.54 L652.17 725.64 L652.28 726.68 L652.46 727.64 L652.72 728.53 L653.07 729.34 L653.51 730.06 L654.05 730.69 L654.66 731.21 L655.37 731.63 L656.13 731.89 L656.92 732.04 L657.73 732.09 L658.57 732.07 L659.37 732.00 L660.15 731.89 L660.90 731.73 L661.64 731.50 L663.00 730.96 L663.00 724.57 L661.26 725.10 L660.98 725.17 L660.74 725.22 L660.53 725.26 L660.37 725.28 L660.27 725.29 L660.07 725.27 L659.93 725.24 L659.83 725.20 L659.75 725.14 L659.67 725.06 L659.58 724.93 L659.48 724.74 L659.39 724.48 L659.31 724.14 L659.25 723.73 L659.22 723.25 L659.20 722.69 L659.20 710.35 L662.79 710.35 L662.79 703.60 L659.20 703.60 L659.20 700.03 L654.30 700.03 L652.76 703.60 L651.88 703.60 L649.74 703.60ZM628.65 728.60 L629.77 726.66 L631.07 723.11 L624.13 722.29 L623.61 724.03 L623.32 724.60 L623.00 724.99 L622.64 725.25 L622.20 725.41 L621.62 725.47 L621.23 725.44 L620.88 725.34 L620.56 725.17 L620.26 724.93 L619.97 724.59 L619.69 724.13 L619.43 723.56 L619.21 722.87 L619.03 722.06 L618.90 721.14 L618.82 720.10 L618.82 720.04 L630.94 720.04 L630.94 718.74 L630.88 716.41 L630.69 714.24 L630.38 712.26 L629.94 710.45 L629.36 708.82 L628.64 707.36 L627.77 706.10 L626.77 705.04 L625.61 704.19 L624.27 703.59 L622.87 703.38 L621.46 703.32 L619.99 703.38 L618.55 703.57 L617.17 704.10 L615.95 704.88 L614.88 705.86 L613.94 707.05 L613.16 708.41 L612.52 709.93 L612.04 711.60 L611.70 713.43 L611.49 715.40 L611.43 717.53 L611.49 719.72 L611.69 721.75 L612.03 723.61 L612.50 725.32 L613.13 726.86 L613.90 728.23 L614.83 729.42 L615.89 730.41 L617.10 731.19 L618.43 731.74 L619.87 732.04 L621.40 732.14 L623.55 731.94 L625.51 731.30 L627.23 730.16ZM618.95 713.05 L619.08 712.32 L619.24 711.68 L619.44 711.13 L619.67 710.66 L619.92 710.28 L620.17 710.01 L620.43 709.81 L620.71 709.68 L621.02 709.59 L621.38 709.56 L621.72 709.59 L622.01 709.67 L622.28 709.80 L622.53 709.98 L622.79 710.25 L623.04 710.60 L623.27 711.05 L623.48 711.59 L623.66 712.24 L623.81 712.99 L623.89 713.63 L618.89 713.63ZM610.73 731.50 L612.09 730.96 L612.09 724.57 L610.35 725.10 L610.07 725.17 L609.83 725.22 L609.62 725.26 L609.46 725.28 L609.36 725.29 L609.16 725.27 L609.02 725.24 L608.92 725.20 L608.84 725.14 L608.76 725.06 L608.67 724.93 L608.57 724.74 L608.48 724.48 L608.40 724.14 L608.34 723.73 L608.31 723.25 L608.29 722.69 L608.29 710.35 L611.88 710.35 L611.88 703.60 L608.29 703.60 L608.29 700.03 L603.39 700.03 L601.85 703.60 L598.83 703.60 L598.83 710.35 L601.23 710.35 L601.23 724.54 L601.26 725.64 L601.37 726.68 L601.55 727.64 L601.81 728.53 L602.16 729.34 L602.60 730.06 L603.14 730.69 L603.75 731.21 L604.46 731.63 L605.22 731.89 L606.01 732.04 L606.82 732.09 L607.66 732.07 L608.46 732.00 L609.24 731.89 L609.99 731.73ZM587.72 728.60 L588.84 726.66 L590.14 723.11 L583.20 722.29 L582.68 724.03 L582.39 724.60 L582.07 724.99 L581.70 725.25 L581.26 725.41 L580.69 725.47 L580.29 725.44 L579.94 725.34 L579.63 725.17 L579.33 724.93 L579.04 724.59 L578.76 724.13 L578.50 723.56 L578.28 722.87 L578.10 722.06 L577.97 721.14 L577.89 720.10 L577.88 720.04 L590.01 720.04 L590.01 718.74 L589.94 716.41 L589.76 714.24 L589.45 712.26 L589.00 710.45 L588.43 708.82 L587.70 707.36 L586.84 706.10 L585.83 705.04 L584.67 704.19 L583.34 703.59 L581.94 703.38 L580.52 703.32 L579.06 703.38 L577.62 703.57 L576.24 704.10 L575.02 704.88 L573.94 705.86 L573.01 707.05 L572.22 708.41 L571.59 709.93 L571.11 711.60 L570.76 713.43 L570.56 715.40 L570.49 717.53 L570.56 719.72 L570.76 721.75 L571.09 723.61 L571.57 725.32 L572.19 726.86 L572.97 728.23 L573.89 729.42 L574.96 730.41 L576.16 731.19 L577.50 731.74 L578.94 732.04 L580.47 732.14 L582.61 731.94 L584.58 731.30 L586.30 730.16ZM578.02 713.05 L578.14 712.32 L578.31 711.68 L578.51 711.13 L578.74 710.66 L578.99 710.28 L579.24 710.01 L579.50 709.81 L579.77 709.68 L580.09 709.59 L580.45 709.56 L580.79 709.59 L581.08 709.67 L581.34 709.80 L581.60 709.98 L581.85 710.25 L582.10 710.60 L582.34 711.05 L582.55 711.59 L582.73 712.24 L582.87 712.99 L582.95 713.63 L577.96 713.63ZM561.94 731.70 L569.06 731.70 L569.06 697.94 L561.94 697.94ZM547.94 730.75 L548.55 731.19 L549.21 731.55 L549.91 731.82 L550.62 731.99 L551.35 732.10 L552.12 732.13 L553.40 732.03 L554.63 731.71 L555.78 731.12 L556.79 730.30 L557.68 729.28 L558.44 728.07 L559.07 726.69 L559.58 725.17 L559.97 723.49 L560.25 721.65 L560.41 719.67 L560.47 717.53 L560.41 715.42 L560.26 713.46 L559.99 711.65 L559.62 709.99 L559.13 708.48 L558.52 707.12 L557.79 705.92 L556.94 704.91 L555.95 704.08 L554.79 703.55 L553.60 703.34 L552.41 703.27 L550.89 703.36 L549.39 703.64 L548.02 704.47 L547.25 705.23 L547.23 704.96 L547.20 704.71 L547.01 703.60 L540.14 703.60 L540.25 705.55 L540.28 706.42 L540.31 707.37 L540.33 708.39 L540.34 709.49 L540.34 710.66 L540.34 733.80 L547.46 733.80 L547.46 730.82 L547.46 730.32ZM552.24 723.78 L551.66 724.74 L551.04 725.21 L550.24 725.37 L549.91 725.34 L549.58 725.23 L549.27 725.03 L548.95 724.74 L548.64 724.31 L548.33 723.74 L548.06 723.03 L547.82 722.20 L547.64 721.26 L547.50 720.19 L547.42 719.01 L547.39 717.72 L547.42 716.42 L547.50 715.23 L547.64 714.15 L547.82 713.19 L548.06 712.34 L548.34 711.61 L548.64 711.03 L548.96 710.58 L549.28 710.28 L549.60 710.08 L549.94 709.96 L550.28 709.93 L551.07 710.09 L551.68 710.54 L552.25 711.46 L552.73 712.94 L553.03 714.97 L553.14 717.53 L553.03 720.16 L552.72 722.26ZM515.58 705.47 L515.55 705.10 L515.53 704.80 L515.42 703.60 L508.57 703.60 L508.65 705.11 L508.66 705.48 L508.68 705.87 L508.69 706.27 L508.71 706.69 L508.72 707.12 L508.74 707.57 L508.75 708.07 L508.76 708.61 L508.76 709.20 L508.77 709.82 L508.77 710.49 L508.77 731.70 L515.89 731.70 L515.89 716.73 L515.91 715.71 L515.98 714.77 L516.10 713.91 L516.27 713.12 L516.48 712.42 L516.73 711.78 L517.00 711.26 L517.26 710.87 L517.51 710.61 L517.73 710.46 L517.93 710.38 L518.09 710.36 L518.54 710.46 L518.90 710.74 L519.28 711.40 L519.62 712.52 L519.84 714.08 L519.92 716.09 L519.92 731.70 L527.00 731.70 L527.00 716.43 L527.05 715.41 L527.14 714.47 L527.28 713.62 L527.45 712.87 L527.66 712.20 L527.90 711.63 L528.16 711.16 L528.41 710.82 L528.65 710.59 L528.86 710.45 L529.05 710.38 L529.21 710.36 L529.66 710.46 L530.01 710.74 L530.40 711.40 L530.74 712.52 L530.96 714.08 L531.03 716.09 L531.03 731.70 L538.12 731.70 L538.12 714.14 L538.07 712.55 L537.95 711.06 L537.73 709.69 L537.43 708.42 L537.02 707.27 L536.52 706.23 L535.91 705.30 L535.19 704.52 L534.31 703.86 L533.32 703.50 L532.34 703.35 L531.35 703.30 L530.60 703.33 L529.88 703.40 L529.17 703.53 L528.41 703.78 L527.72 704.23 L527.14 704.72 L526.62 705.31 L526.13 705.98 L525.70 706.72 L525.47 706.17 L524.53 704.85 L523.26 703.83 L521.77 703.41 L520.25 703.30 L519.53 703.33 L518.86 703.40 L518.18 703.54 L517.44 703.81 L516.78 704.26 L516.21 704.75 L515.68 705.34 L515.58 705.49ZM499.11 703.06 L506.23 703.06 L506.23 697.94 L499.11 697.94ZM506.23 731.70 L506.23 703.60 L499.11 703.60 L499.11 731.70ZM497.15 719.53 L496.93 718.95 L496.67 718.42 L496.39 717.92 L496.08 717.45 L495.74 717.01 L495.37 716.60 L494.98 716.22 L494.55 715.88 L494.08 715.55 L493.58 715.25 L493.05 714.96 L492.48 714.70 L491.88 714.46 L491.27 714.23 L490.64 714.01 L489.98 713.79 L489.29 713.57 L488.58 713.36 L487.85 713.15 L487.37 713.01 L486.98 712.87 L486.65 712.72 L486.39 712.58 L486.19 712.45 L486.04 712.33 L485.94 712.21 L485.86 712.09 L485.80 711.95 L485.75 711.78 L485.71 711.57 L485.70 711.33 L485.72 711.00 L485.76 710.74 L485.83 710.54 L485.91 710.39 L486.00 710.28 L486.11 710.18 L486.28 710.08 L486.52 709.98 L486.82 709.90 L487.18 709.83 L487.61 709.79 L488.09 709.77 L488.58 709.79 L488.99 709.84 L489.32 709.92 L489.59 710.02 L489.80 710.13 L489.95 710.26 L490.10 710.42 L490.24 710.62 L490.37 710.87 L490.48 711.18 L490.58 711.54 L490.84 713.05 L497.40 712.11 L496.95 709.84 L496.62 708.73 L496.19 707.70 L495.65 706.76 L495.01 705.91 L494.26 705.16 L493.42 704.52 L492.48 704.00 L491.43 703.60 L490.34 703.43 L489.25 703.34 L488.10 703.30 L486.80 703.34 L485.60 703.45 L484.39 703.65 L483.25 704.14 L482.27 704.74 L481.40 705.48 L480.65 706.35 L480.04 707.31 L479.57 708.37 L479.24 709.52 L479.04 710.74 L478.98 712.04 L479.00 712.85 L479.07 713.61 L479.19 714.34 L479.36 715.04 L479.58 715.70 L479.85 716.33 L480.17 716.91 L480.54 717.46 L480.95 717.97 L481.41 718.44 L481.91 718.88 L482.45 719.28 L483.10 719.66 L483.89 720.03 L484.80 720.39 L485.86 720.76 L487.05 721.13 L488.37 721.51 L488.91 721.67 L489.37 721.83 L489.76 722.00 L490.07 722.17 L490.32 722.33 L490.49 722.48 L490.62 722.62 L490.72 722.77 L490.80 722.94 L490.86 723.14 L490.90 723.38 L490.92 723.66 L490.90 724.02 L490.84 724.32 L490.77 724.56 L490.67 724.74 L490.55 724.90 L490.40 725.03 L490.21 725.15 L489.94 725.27 L489.59 725.38 L489.16 725.46 L488.65 725.51 L488.06 725.53 L487.43 725.51 L486.88 725.45 L486.42 725.37 L486.07 725.26 L485.81 725.14 L485.63 725.01 L485.47 724.85 L485.31 724.63 L485.14 724.34 L484.99 723.98 L484.85 723.54 L484.48 721.96 L478.00 723.29 L478.54 725.57 L478.91 726.71 L479.38 727.75 L479.95 728.69 L480.62 729.52 L481.39 730.25 L482.27 730.86 L483.25 731.35 L484.33 731.72 L485.49 731.95 L486.73 732.09 L488.07 732.13 L489.44 732.08 L490.73 731.90 L491.96 731.59 L493.09 731.11 L494.12 730.49 L495.05 729.74 L495.84 728.85 L496.50 727.87 L497.00 726.78 L497.36 725.61 L497.57 724.36 L497.64 723.05 L497.62 722.26 L497.56 721.52 L497.46 720.82 L497.33 720.16Z"/></svg>
<div class="a" style="left:397px;top:792.5px;font-size:19.1px;line-height:22.5px;color:#ff00ff;font-style:italic;-webkit-text-stroke:0.3px #ff00ff;white-space:nowrap">The note text above cannot be<br>be changed or deleted.<br>(attribute "block-disable-interactions")</div>
<svg width="1667" height="1054" style="left:0;top:0">
<g transform="translate(14.3 1011.8) scale(0.52)">
<path d="M51 24.5 Q53.5 22 56 24.5 L79.5 51 Q82.5 54.5 78.5 56.3 L59.2 67.3 L64.5 80 L49.5 74 L49.5 56.5 L45.5 56.5 L45.5 73 L28.2 53.8 Q25.5 50.8 28.5 48 Z" transform="translate(-26 -22)" fill="#3f85c7"/>
<path d="M49.5 74 L59.2 67.3 L64.5 80 Z" transform="translate(-26 -22)" fill="#5eaae2"/>
<path d="M41.5 45 Q46 39.5 52 39.8 Q61.5 40.5 61.5 48.5 Q61 56 48.5 56.2" transform="translate(-26 -22)" fill="none" stroke="#e9e9e9" stroke-width="3.6" stroke-linecap="round"/>
<path d="M47.5 55 V73" transform="translate(-26 -22)" stroke="#e9e9e9" stroke-width="4"/>
</g>
</svg>
<div class="a" style="left:47.4px;top:1018px;font-family:'Liberation Serif',serif;font-size:15.5px;line-height:15px;color:#3f85c7;letter-spacing:0;-webkit-text-stroke:0.35px #3f85c7;white-space:nowrap">printformer</div>
<div class="a" style="left:1140px;top:114px;width:382px;height:940px;background:#434247"></div>
<div class="a" style="left:1140px;top:136px;width:1px;height:918px;background:#8a8a8e"></div>
<div class="a" style="left:1522px;top:114px;width:16px;height:940px;background:#f8f8f8"></div>
<div class="a" style="left:1526px;top:117px;width:9px;height:623px;background:#c8c8c8;border-radius:4.5px"></div>
<div class="h" style="top:133.8px;letter-spacing:0;transform:scaleX(1.1640);transform-origin:0 0">Replace element</div>
<div class="a" style="left:1154px;top:177.7px;width:354px;height:54px;background:#60ac68;border-radius:5px"></div>
<svg width="1667" height="1054" style="left:0;top:0"><g fill="none" stroke="#f2f8f2" stroke-width="1.8" stroke-linejoin="round">
<path d="M1262.5 218.5 L1273.7 199.5 L1283.3 209.8 L1287 207.3 L1292.5 218.5 Z"/>
<circle cx="1284.3" cy="194.3" r="2.8"/>
</g></svg>
<div class="a" style="left:1298px;top:196.8px;font-size:15px;line-height:15px;font-weight:bold;color:#eaf3ea;white-space:nowrap;letter-spacing:0;transform:scaleX(1.074);transform-origin:0 0">Upload Image</div>
<div class="dots" style="top:249.3px"></div>
<div class="h" style="top:276.3px;letter-spacing:0;transform:scaleX(1.1540);transform-origin:0 0">Change color</div>
<div class="a" style="left:1153.7px;top:320.3px;width:45.6px;height:45.6px;border-radius:50%;background:#666;border:1.2px solid #a8a8a8"></div>
<div class="a" style="left:1153.7px;top:383px;width:41px;height:41px;border-radius:50%;background:#004a9f;border:1.2px solid #e8e8e8"></div>
<svg width="1667" height="1054" style="left:0;top:0">
<circle cx="1487.8" cy="341" r="15.4" fill="none" stroke="#dcdcdc" stroke-width="1.6"/>
<path d="M1487.8 336 V352" stroke="#dcdcdc" stroke-width="1.6"/>
<circle cx="1487.8" cy="331.5" r="1.2" fill="#dcdcdc"/>
</svg>
<div class="dots" style="top:455.3px"></div>
<div class="h" style="top:482.5px;letter-spacing:0;transform:scaleX(1.1770);transform-origin:0 0">Ausschnitt ändern</div>
<div class="a" style="left:1154px;top:511.5px;font-size:19px;line-height:26.7px;color:#d0d0d0;white-space:nowrap;letter-spacing:0;transform:scaleX(1.08);transform-origin:0 0">Double-click in the frame to change<br>the image section.</div>
<div class="dots" style="top:584.2px"></div>
<div class="h" style="top:612.2px;letter-spacing:0;transform:scaleX(1.1700);transform-origin:0 0">Zoom</div>
<svg width="1667" height="1054" style="left:0;top:0"><g fill="none" stroke="#dcdcdc" stroke-width="2">
<path d="M1161.6 675.6 H1187"/>
<path d="M1251 675.6 H1276.7 M1263.8 663.3 V688"/>
<path d="M1221.3 673.6 L1229 666 M1223.3 666 H1229 V672 M1217 677.8 L1209.4 685.4 M1209.4 679.6 V685.4 H1215.2" stroke-width="1.8" stroke-linecap="round" stroke-linejoin="round"/>
</g></svg>
<div class="dots" style="top:714.3px"></div>
<div class="h" style="top:741.2px;letter-spacing:0;transform:scaleX(1.1780);transform-origin:0 0">change transparency</div>
<svg width="1667" height="1054" style="left:0;top:0">
<path d="M1154 795.3 H1436" stroke="#f0f0f0" stroke-width="2.4"/>
<circle cx="1445" cy="795.3" r="8.6" fill="#434247" stroke="#f0f0f0" stroke-width="2"/>
</svg>
<div class="a" style="left:1475.5px;top:788px;font-size:13px;line-height:13px;color:#d6d6d6;white-space:nowrap;letter-spacing:-0.2px">100%</div>
<div class="dots" style="top:821.6px"></div>
<div class="h" style="top:848.7px;letter-spacing:0;transform:scaleX(1.1630);transform-origin:0 0">element size (dtp)</div>
<svg width="1667" height="1054" style="left:0;top:0"><g fill="none" stroke="#d6d6d6" stroke-width="1.7" stroke-linejoin="round">
<path d="M1165.6 903.5 H1174.5 Q1180.5 903.5 1180.5 908 Q1180.5 912.6 1174.5 912.6 H1165.6 Z"/>
<path d="M1165.6 912.6 H1175.5 Q1181.6 912.6 1181.6 917.8 Q1181.6 922.8 1175.5 922.8 H1165.6 Z"/>
<path d="M1366 902.8 V923.5 M1384.3 902.8 V923.5 M1366 913.2 H1384.3"/>
</g></svg>
<div class="a" style="left:1199px;top:893px;width:107.7px;height:40px;background:#2e2d32;border-radius:2px"></div>
<div class="a" style="left:1210.5px;top:906px;font-size:16px;line-height:16px;color:#e6e6e6;white-space:nowrap;letter-spacing:0;transform:scaleX(1.07);transform-origin:0 0">54,83</div>
<svg width="1667" height="1054" style="left:0;top:0"><g fill="none" stroke="#dcdcdc" stroke-width="2">
<rect x="1329.8" y="899.05" width="17" height="7.5" rx="3.75" transform="rotate(-45 1338.3 902.8)"/>
<rect x="1313.8" y="919.55" width="17" height="7.5" rx="3.75" transform="rotate(-45 1322.3 923.3)"/>
<path d="M1315.8 910 L1319.5 909.2 M1318 904.5 L1321 906.8 M1322.5 901.5 L1324 905 M1344.8 916 L1341.1 916.8 M1342.6 921.5 L1339.6 919.2 M1338.1 924.5 L1336.6 921" stroke-width="1.6" stroke-linecap="round"/>
</g></svg>
<div class="a" style="left:1399.8px;top:893px;width:108.2px;height:40px;background:#2e2d32;border-radius:2px"></div>
<div class="a" style="left:1411.7px;top:906px;font-size:16px;line-height:16px;color:#e6e6e6;white-space:nowrap;letter-spacing:0;transform:scaleX(1.07);transform-origin:0 0">90,29</div>
<div class="dots" style="top:950.7px"></div>
<div class="h" style="top:977.7px;letter-spacing:0;transform:scaleX(1.1980);transform-origin:0 0">element position (dtp)</div>
<svg width="1667" height="1054" style="left:0;top:0"><g fill="none" stroke="#d8d8d8" stroke-width="2">
<path d="M1163 1031 L1185 1054 M1185 1031 L1163 1054"/>
<path d="M1365 1031 L1375.5 1043 L1386 1031 M1375.5 1043 V1054"/>
</g></svg>
<div class="a" style="left:1199px;top:1022px;width:107.7px;height:40px;background:#2e2d32;border-radius:2px"></div>
<div class="a" style="left:1210.5px;top:1035px;font-size:16px;line-height:16px;color:#e6e6e6;white-space:nowrap;letter-spacing:0;transform:scaleX(1.07);transform-origin:0 0">59,04</div>
<div class="a" style="left:1399.8px;top:1022px;width:108.2px;height:40px;background:#2e2d32;border-radius:2px"></div>
<div class="a" style="left:1411.7px;top:1035px;font-size:16px;line-height:16px;color:#e6e6e6;white-space:nowrap;letter-spacing:0;transform:scaleX(1.07);transform-origin:0 0">48,47</div>
<div class="a" style="left:1538px;top:114px;width:129px;height:940px;background:#2e2d32"></div>
<div class="a" style="left:1538.3px;top:113.2px;width:128.7px;height:112.7px;background:#444347;border-style:solid;border-color:#c4005c;border-width:4.7px 4.2px 4.4px 4.9px"></div>
<svg width="1667" height="1054" style="left:0;top:0"><g fill="none" stroke="#dedede" stroke-width="1.8" stroke-linejoin="round">
<path d="M1605 142 H1592.5 A1.5 1.5 0 0 0 1591 143.5 V172.3 A1.5 1.5 0 0 0 1592.5 173.8 H1614.5 A1.5 1.5 0 0 0 1616 172.3 V148"/>
<path d="M1598.5 159.5 L1599.5 152.5 L1610.8 141.5 Q1612.5 140 1614.3 141.5 L1615.5 142.7 Q1617 144.5 1615.5 146 L1604.5 157.3 Z"/>
<rect x="1589" y="254.5" width="13.5" height="13.5" rx="1.5"/>
<circle cx="1612.5" cy="261.3" r="7.2"/>
<path d="M1591.8 271.5 H1599.5 L1603.3 278.2 L1599.5 285 H1591.8 L1588 278.2 Z"/>
<path d="M1612.5 271.5 L1619.5 284.8 H1605.5 Z"/>
</g></svg>
<div class="lbl" style="left:1503.9px;width:200px;top:185.6px;color:#d2d2d2;font-size:12.7px;transform:scaleX(1.16)">Edit</div>
<div class="lbl" style="left:1503.9px;width:200px;top:297.7px;color:#c4c4c4;font-size:12.7px;transform:scaleX(1.14)">Forms</div>
<svg width="1667" height="1054" style="left:0;top:0"><g fill="none" stroke="#dcdcdc" stroke-width="1.6" stroke-linejoin="round">
<polygon points="1601.94,967.28 1605.26,967.28 1605.97,970.80 1608.55,971.49 1610.93,968.80 1613.80,970.45 1612.65,973.86 1614.54,975.75 1617.95,974.60 1619.60,977.47 1616.91,979.85 1617.60,982.43 1621.12,983.14 1621.12,986.46 1617.60,987.17 1616.91,989.75 1619.60,992.13 1617.95,995.00 1614.54,993.85 1612.65,995.74 1613.80,999.15 1610.93,1000.80 1608.55,998.11 1605.97,998.80 1605.26,1002.32 1601.94,1002.32 1601.23,998.80 1598.65,998.11 1596.27,1000.80 1593.40,999.15 1594.55,995.74 1592.66,993.85 1589.25,995.00 1587.60,992.13 1590.29,989.75 1589.60,987.17 1586.08,986.46 1586.08,983.14 1589.60,982.43 1590.29,979.85 1587.60,977.47 1589.25,974.60 1592.66,975.75 1594.55,973.86 1593.40,970.45 1596.27,968.80 1598.65,971.49 1601.23,970.80"/>
<circle cx="1603.6" cy="984.8" r="9"/>
</g></svg>
<div class="lbl" style="left:1503.9px;width:200px;top:1013.2px;color:#c4c4c4;font-size:12.7px;transform:scaleX(1.15)">Settings</div>
<div class="a" style="left:1666px;top:226px;width:1px;height:828px;background:#6c6c70"></div>
<div class="a" style="left:1654px;top:1040px;width:13px;height:14px;background:radial-gradient(circle at 0 0,transparent 12px,#0b1e3c 13px)"></div>
<div class="a" style="left:1538px;top:1040px;width:129px;height:14px;overflow:hidden"><div class="a" style="left:0;top:-20px;width:129px;height:34px;background:#2e2d32;border-bottom-right-radius:10px;border-right:1px solid #6c6c70"></div></div>
<div class="a" style="left:0;top:1053px;width:1667px;height:1px;background:#f7f7f7"></div>
</div>
</body></html>
